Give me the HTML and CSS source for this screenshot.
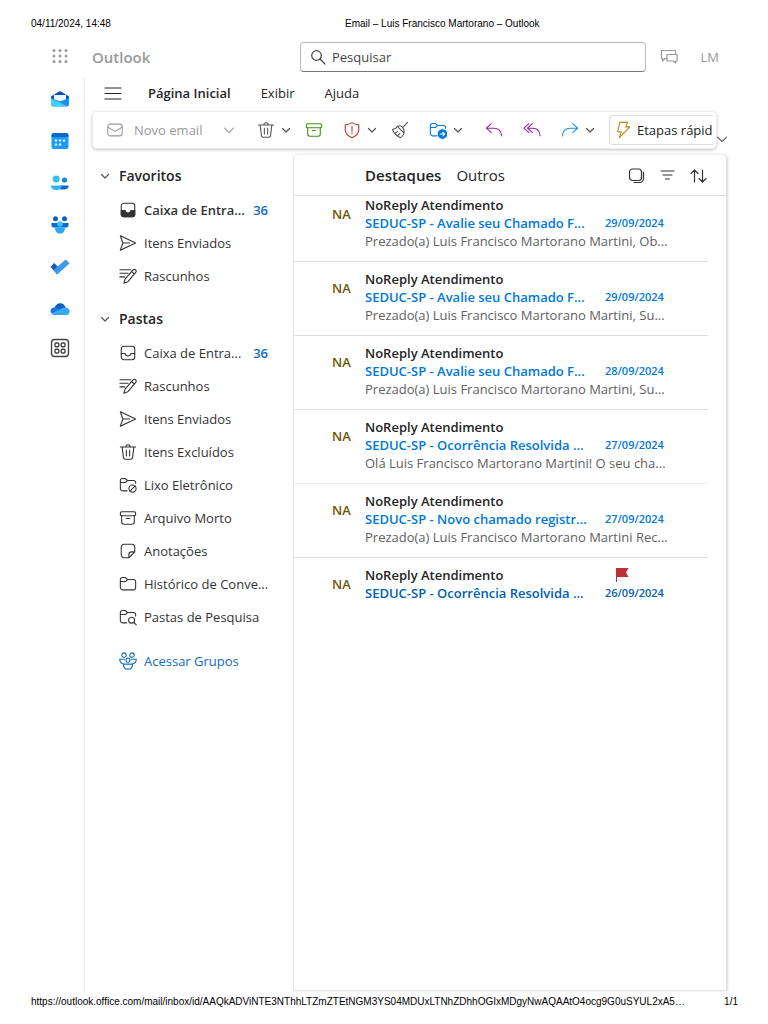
FILE: index.html
```html
<!DOCTYPE html>
<html lang="pt-BR">

<head>
    <meta charset="UTF-8" />
    <meta name="viewport" content="width=device-width, initial-scale=1" />
    <title>Email – Luis Francisco Martorano – Outlook</title>
    <link rel="stylesheet" href="styles.css">
</head>

<body>
    <svg class="sprite" aria-hidden="true">
        <symbol id="i-chevron" viewBox="0 0 14 14"><path d="M3.500 5.500L7 9l3.500-3.500" /></symbol>
        <symbol id="i-mail" viewBox="0 0 20 20"><rect x="2" y="3.5" width="16" height="13" rx="2.5" /><path d="M2 7l8 4.5L18 7" /></symbol>
        <symbol id="i-trash" viewBox="0 0 20 20"><path d="M1.500 4.500h17M7.500 4.500a2.500 2.500 0 0 1 5 0M3.500 4.500l1.400 11.500a2.200 2.200 0 0 0 2.200 2h5.800a2.200 2.200 0 0 0 2.200-2l1.400-11.500M8.200 8v6.500M11.800 8v6.500" /></symbol>
        <symbol id="i-archive" viewBox="0 0 20 20"><rect x="1.500" y="3" width="17" height="4.500" rx="1.500" /><path d="M3 7.500v7a2.500 2.500 0 0 0 2.500 2.500h9a2.500 2.500 0 0 0 2.500-2.500v-7M8 10.500h4" /></symbol>
        <symbol id="i-shield" viewBox="0 0 20 20"><path d="M10 1.800c2.300 1.500 4.600 2.300 7.500 2.500v5c0 4.500-2.600 7.400-7.500 9.300-4.900-1.900-7.500-4.800-7.500-9.300v-5c2.900-.2 5.200-1 7.500-2.500zM10 6v5M10 13.200v1" /></symbol>
        <symbol id="i-broom" viewBox="0 0 20 20"><path d="M18.500 1.500l-5.500 5.500M7 6l7.500 7.500M7 6c1.800-1 4-.8 5.500.7s2.500 4 2 6.800c-.7 2.300-2 4-4 5C6.500 17 3.500 14 1.500 9.500 4 9 6 8 7 6zM4.500 13.500l3-2M7.500 16.300l2.500-2.500" /></symbol>
        <symbol id="i-move" viewBox="0 0 20 20"><path d="M9 16.500H4A2.500 2.500 0 0 1 1.500 14V5A2.200 2.200 0 0 1 3.700 2.800h3.500L9.500 5h6.700a2.300 2.300 0 0 1 2.300 2.300V8M1.500 7.300h5.700L9.500 5" /><circle cx="15" cy="14.500" r="4.800" fill="currentColor" /><path class="on" d="M12.500 14.500h5M15.500 12.500l2 2-2 2" /></symbol>
        <symbol id="i-reply" viewBox="0 0 20 20"><path d="M7 3L1.500 8 7 13M1.500 8h8.500c4.500 0 8 3 8.500 8.500" /></symbol>
        <symbol id="i-replyall" viewBox="0 0 20 20"><path d="M6.500 3L1 8l5.500 5M10.500 3L5 8l5.500 5M5 8h6c4.500 0 7.500 3 8 8.500" /></symbol>
        <symbol id="i-forward" viewBox="0 0 20 20"><path d="M13 3l5.500 5-5.500 5M18.500 8H10c-4.500 0-8 3-8.500 8.500" /></symbol>
        <symbol id="i-bolt" viewBox="0 0 20 20"><path d="M6.500 1.500h8.500l-2 5h4.500L6 18.500 8 12H4z" /></symbol>
        <symbol id="i-inbox" viewBox="0 0 20 20"><rect x="2.500" y="2.500" width="15" height="15" rx="3" /><path d="M2.500 10.500h4.200c.6 3.800 6 3.800 6.600 0h4.200" /></symbol>
        <symbol id="i-inbox-fill" viewBox="0 0 20 20"><rect x="2.500" y="2.500" width="15" height="15" rx="3" /><path fill="currentColor" d="M2.500 10.500h4.200c.6 3.800 6 3.800 6.600 0h4.200V15a2.500 2.500 0 0 1-2.500 2.500H5A2.500 2.500 0 0 1 2.500 15z" /></symbol>
        <symbol id="i-send" viewBox="0 0 20 20"><path d="M1.500 2l17 8-17 8 2.800-8zM4.300 10h7.500" /></symbol>
        <symbol id="i-draft" viewBox="0 0 20 20"><path d="M5.500 18l1.200-4.500L15.800 3a2.100 2.100 0 0 1 3 2.800L9.700 16.500zM14 5l3 3M1 3h12M1 7h9M1 11h5.500" /></symbol>
        <symbol id="i-junk" viewBox="0 0 20 20"><path d="M9 16.500H4A2.500 2.500 0 0 1 1.500 14V5A2.200 2.200 0 0 1 3.700 2.800h3.500L9.500 5h6.700a2.300 2.300 0 0 1 2.300 2.300V8M1.500 7.300h5.700L9.500 5" /><circle cx="15" cy="14" r="4" /><path d="M12.200 16.800l5.600-5.600" /></symbol>
        <symbol id="i-note" viewBox="0 0 20 20"><path d="M5.500 2.500h9a3 3 0 0 1 3 3V11l-6.500 6.500H5.500a3 3 0 0 1-3-3v-9a3 3 0 0 1 3-3zM11 17.500V14a3 3 0 0 1 3-3h3.500" /></symbol>
        <symbol id="i-folder" viewBox="0 0 20 20"><path d="M1.500 5A2.200 2.200 0 0 1 3.700 2.800h3.500L9.500 5h6.700a2.300 2.300 0 0 1 2.300 2.300v6.900a2.300 2.300 0 0 1-2.300 2.300H4A2.500 2.500 0 0 1 1.500 14zM1.500 7.300h5.700L9.500 5" /></symbol>
        <symbol id="i-fsearch" viewBox="0 0 20 20"><path d="M8.500 16.500H4A2.500 2.500 0 0 1 1.500 14V5A2.200 2.200 0 0 1 3.700 2.800h3.500L9.500 5h6.700a2.300 2.300 0 0 1 2.300 2.300V9M1.500 7.300h5.700L9.500 5M16.500 16l2.700 2.700" /><circle cx="14" cy="13.500" r="3.300" /></symbol>
        <symbol id="i-groups" viewBox="0 0 20 20"><circle cx="5.500" cy="3.500" r="2.500" /><circle cx="14.500" cy="3.500" r="2.500" /><circle cx="10" cy="9" r="2.300" /><path d="M6 8H.800c0 3 1.500 4.800 4 5M14 8h5.200c0 3-1.500 4.800-4 5M5 13.500h10c0 3.500-2 5.500-5 5.500s-5-2-5-5.500z" /></symbol>
        <symbol id="i-flag" viewBox="0 0 14 14"><path d="M1 0h12.500l-2.500 4.500 2.500 4.500H2v5H1z" /></symbol>
    </svg>

    <header class="print-line">
        <span class="stamp">04/11/2024, 14:48</span>
        <span>Email – Luis Francisco Martorano – Outlook</span>
    </header>

    <div class="topbar">
        <div class="brand">
            <button class="icon-btn waffle" aria-label="Iniciador de aplicativos">
                <svg viewBox="0 0 18 18"><g fill="#999"><circle cx="3" cy="2.500" r="1.500" /><circle cx="9" cy="2.500" r="1.500" /><circle cx="15" cy="2.500" r="1.500" /><circle cx="3" cy="8" r="1.500" /><circle cx="9" cy="8" r="1.500" /><circle cx="15" cy="8" r="1.500" /><circle cx="3" cy="13.500" r="1.500" /><circle cx="9" cy="13.500" r="1.500" /><circle cx="15" cy="13.500" r="1.500" /></g></svg>
            </button>
            <span class="brand-name">Outlook</span>
        </div>
        <label class="search">
            <svg class="icon" viewBox="0 0 16 16"><circle cx="6.500" cy="6.500" r="4.800" /><path d="M10 10l5 5" /></svg>
            <input type="text" placeholder="Pesquisar" aria-label="Pesquisar">
        </label>
        <div class="account">
            <button class="icon-btn chat" aria-label="Teams">
                <svg class="icon" viewBox="0 0 18 18"><path d="M6.500 10.500H5L2.500 13v-2.500h-1v-8h14v3M7 6.500h10v6.500h-1.500v2L13 13H7z" /></svg>
            </button>
            <button class="icon-btn initials">LM</button>
        </div>
    </div>

    <div class="app">
        <nav class="rail" aria-label="Aplicativos">
            <button aria-label="Email">
                <svg viewBox="0 0 20 20"><path fill="#0f4fb5" d="M1 7.500l8-5q1-.6 2 0l8 5v6H1z" /><path fill="#e9f5ff" d="M4 6h12v6.500H4z" /><path fill="#1a8fee" d="M1 9l9 3.500L19 9v6a2.500 2.500 0 0 1-2.500 2.500h-13A2.500 2.500 0 0 1 1 15z" /><path fill="#3fd0fb" d="M1 9.500l16.500 7.800a3 3 0 0 1-1 .2h-13A2.500 2.500 0 0 1 1 15z" /></svg>
            </button>
            <button aria-label="Calendário">
                <svg viewBox="0 0 20 20"><rect x="1.500" y="2" width="17" height="16" rx="2.500" fill="#1b9cf5" /><path fill="#0b67c9" d="M4 2h12a2.500 2.500 0 0 1 2.500 2.500V6h-17V4.500A2.500 2.500 0 0 1 4 2z" /><g fill="#e3f4ff"><circle cx="6" cy="9.500" r="1.200" /><circle cx="10" cy="9.500" r="1.200" /><circle cx="14" cy="9.500" r="1.200" /><circle cx="6" cy="13.500" r="1.200" /><circle cx="10" cy="13.500" r="1.200" /></g></svg>
            </button>
            <button aria-label="Pessoas">
                <svg viewBox="0 0 20 20"><circle cx="6.200" cy="6" r="3.500" fill="#33bdf5" /><circle cx="14.500" cy="7" r="2.600" fill="#1685dc" /><path fill="#0b67c9" d="M10 12.500h8.500c.3 2.800-1.500 4-4.500 4h-4z" /><path fill="#2bb7f5" d="M1 12.500h10.500c.3 3-2 4.500-5.200 4.500S.7 15.500 1 12.500z" /></svg>
            </button>
            <button aria-label="Grupos">
                <svg viewBox="0 0 20 20"><circle cx="5.500" cy="3.800" r="2.500" fill="#0f5fc0" /><circle cx="14.500" cy="3.800" r="2.500" fill="#0f5fc0" /><path fill="#0f69cb" d="M1.500 8h17v2.500a2 2 0 0 1-2 2h-13a2 2 0 0 1-2-2z" /><circle cx="10" cy="9" r="2.800" fill="#35c3f6" /><path fill="#2aa9f2" d="M5 12.500h10c0 4-2 6-5 6s-5-2-5-6z" /></svg>
            </button>
            <button aria-label="To Do">
                <svg viewBox="0 0 20 20"><path fill="#1d57b8" d="M.500 9.700l3.700-3.700 6.300 6.300-3.700 4.700z" /><path fill="#3d9aeb" d="M3.500 13L15.700 2.500l3.800 3.700L7.300 17.500z" /></svg>
            </button>
            <button aria-label="OneDrive">
                <svg viewBox="0 0 20 20"><path fill="#0f5cbf" d="M4.500 9c1-3.500 3.500-5 6-4.800 2.500.1 4.200 1.800 5 4.300L12 13H5z" /><path fill="#1479d9" d="M4.500 8.500c1.500-.3 3 0 4.500 1l6 5.500H4A3.500 3.500 0 0 1 .500 12c0-2 1.500-3.300 4-3.500z" /><path fill="#37a8f4" d="M15.500 8.500c5.500.3 5.500 7.500.5 7.500H4a4 4 0 0 1-3-1.500l9-4c1.500-1.500 3.500-2.300 5.500-2z" /></svg>
            </button>
            <button class="last" aria-label="Mais aplicativos">
                <svg class="icon apps" viewBox="0 0 20 20"><rect x="1.500" y="1.500" width="17" height="17" rx="3" /><rect x="5" y="5" width="3.800" height="3.800" rx="1" /><rect x="11.200" y="5" width="3.800" height="3.800" rx="1" /><rect x="5" y="11.200" width="3.800" height="3.800" rx="1" /><rect x="11.200" y="11.200" width="3.800" height="3.800" rx="1" /></svg>
            </button>
        </nav>

        <main class="main">
            <div class="tabs">
                <button class="icon-btn menu" aria-label="Menu">
                    <svg class="icon" viewBox="0 0 18 18"><path d="M1 4h16M1 9.500h16M1 15h16" /></svg>
                </button>
                <button class="tab active">Página Inicial</button>
                <button class="tab">Exibir</button>
                <button class="tab">Ajuda</button>
            </div>

            <div class="ribbon">
                <div class="toolbar">
                    <button class="new-mail">
                        <svg class="icon"><use href="#i-mail" /></svg>
                        <span>Novo email</span>
                        <svg class="icon chevron wide"><use href="#i-chevron" /></svg>
                    </button>
                    <div class="tools">
                        <div class="pair">
                            <button class="tool" aria-label="Excluir"><svg class="icon"><use href="#i-trash" /></svg><svg class="icon chevron"><use href="#i-chevron" /></svg></button>
                            <button class="tool green" aria-label="Arquivar"><svg class="icon"><use href="#i-archive" /></svg></button>
                        </div>
                        <div class="pair">
                            <button class="tool red" aria-label="Denunciar"><svg class="icon"><use href="#i-shield" /></svg><svg class="icon chevron"><use href="#i-chevron" /></svg></button>
                            <button class="tool" aria-label="Limpar"><svg class="icon"><use href="#i-broom" /></svg></button>
                        </div>
                        <button class="tool blue" aria-label="Mover para"><svg class="icon"><use href="#i-move" /></svg><svg class="icon chevron"><use href="#i-chevron" /></svg></button>
                        <button class="tool purple" aria-label="Responder"><svg class="icon"><use href="#i-reply" /></svg></button>
                        <button class="tool purple" aria-label="Responder a todos"><svg class="icon"><use href="#i-replyall" /></svg></button>
                        <button class="tool sky" aria-label="Encaminhar"><svg class="icon"><use href="#i-forward" /></svg><svg class="icon chevron"><use href="#i-chevron" /></svg></button>
                    </div>
                    <button class="quick-steps">
                        <svg class="icon"><use href="#i-bolt" /></svg>
                        <span>Etapas rápidas</span>
                    </button>
                </div>
                <button class="icon-btn expand" aria-label="Opções da faixa"><svg class="icon chevron wide"><use href="#i-chevron" /></svg></button>
            </div>

            <div class="content">
                <nav class="folders" aria-label="Pastas">
                    <button class="group"><svg class="icon chevron"><use href="#i-chevron" /></svg>Favoritos</button>
                    <a href="#" class="folder unread"><svg class="icon"><use href="#i-inbox-fill" /></svg><span>Caixa de Entra...</span><b>36</b></a>
                    <a href="#" class="folder"><svg class="icon"><use href="#i-send" /></svg><span>Itens Enviados</span></a>
                    <a href="#" class="folder"><svg class="icon"><use href="#i-draft" /></svg><span>Rascunhos</span></a>

                    <button class="group second"><svg class="icon chevron"><use href="#i-chevron" /></svg>Pastas</button>
                    <a href="#" class="folder"><svg class="icon"><use href="#i-inbox" /></svg><span>Caixa de Entra...</span><b>36</b></a>
                    <a href="#" class="folder"><svg class="icon"><use href="#i-draft" /></svg><span>Rascunhos</span></a>
                    <a href="#" class="folder"><svg class="icon"><use href="#i-send" /></svg><span>Itens Enviados</span></a>
                    <a href="#" class="folder"><svg class="icon"><use href="#i-trash" /></svg><span>Itens Excluídos</span></a>
                    <a href="#" class="folder"><svg class="icon"><use href="#i-junk" /></svg><span>Lixo Eletrônico</span></a>
                    <a href="#" class="folder"><svg class="icon"><use href="#i-archive" /></svg><span>Arquivo Morto</span></a>
                    <a href="#" class="folder"><svg class="icon"><use href="#i-note" /></svg><span>Anotações</span></a>
                    <a href="#" class="folder"><svg class="icon"><use href="#i-folder" /></svg><span>Histórico de Conve...</span></a>
                    <a href="#" class="folder"><svg class="icon"><use href="#i-fsearch" /></svg><span>Pastas de Pesquisa</span></a>

                    <a href="#" class="folder groups"><svg class="icon"><use href="#i-groups" /></svg><span>Acessar Grupos</span></a>
                </nav>

                <section class="panel">
                    <div class="panel-head">
                        <button class="pivot active">Destaques</button>
                        <button class="pivot">Outros</button>
                        <div class="panel-tools">
                            <button class="icon-btn" aria-label="Selecionar"><svg class="icon" viewBox="0 0 18 18"><rect x="1.500" y="3" width="12" height="11.500" rx="3" /><path d="M15.500 6v6.500a4 4 0 0 1-4 4H6" /></svg></button>
                            <button class="icon-btn" aria-label="Filtrar"><svg class="icon" viewBox="0 0 18 18"><path d="M2 5h13M4 9h9M6.500 13h4" /></svg></button>
                            <button class="icon-btn" aria-label="Classificar"><svg class="icon sort" viewBox="0 0 18 18"><path d="M4.500 16V4M1 7.500L4.500 4 8 7.500M12.500 4v12M9 12.500l3.500 3.500 3.500-3.500" /></svg></button>
                        </div>
                    </div>

                    <article class="message">
                        <span class="avatar">NA</span>
                        <div class="sender">NoReply Atendimento</div>
                        <a href="#" class="subject">SEDUC-SP - Avalie seu Chamado F...</a>
                        <time class="date">29/09/2024</time>
                        <div class="preview">Prezado(a) Luis Francisco Martorano Martini, Ob...</div>
                    </article>
                    <article class="message">
                        <span class="avatar">NA</span>
                        <div class="sender">NoReply Atendimento</div>
                        <a href="#" class="subject">SEDUC-SP - Avalie seu Chamado F...</a>
                        <time class="date">29/09/2024</time>
                        <div class="preview">Prezado(a) Luis Francisco Martorano Martini, Su...</div>
                    </article>
                    <article class="message">
                        <span class="avatar">NA</span>
                        <div class="sender">NoReply Atendimento</div>
                        <a href="#" class="subject">SEDUC-SP - Avalie seu Chamado F...</a>
                        <time class="date">28/09/2024</time>
                        <div class="preview">Prezado(a) Luis Francisco Martorano Martini, Su...</div>
                    </article>
                    <article class="message faint">
                        <span class="avatar">NA</span>
                        <div class="sender">NoReply Atendimento</div>
                        <a href="#" class="subject">SEDUC-SP - Ocorrência Resolvida ...</a>
                        <time class="date">27/09/2024</time>
                        <div class="preview">Olá Luis Francisco Martorano Martini! O seu cha...</div>
                    </article>
                    <article class="message">
                        <span class="avatar">NA</span>
                        <div class="sender">NoReply Atendimento</div>
                        <a href="#" class="subject">SEDUC-SP - Novo chamado registr...</a>
                        <time class="date">27/09/2024</time>
                        <div class="preview">Prezado(a) Luis Francisco Martorano Martini Rec...</div>
                    </article>
                    <article class="message dark">
                        <span class="avatar">NA</span>
                        <div class="sender">NoReply Atendimento</div>
                        <svg class="flag" role="img" aria-label="Sinalizado"><use href="#i-flag" /></svg>
                        <a href="#" class="subject">SEDUC-SP - Ocorrência Resolvida ...</a>
                        <time class="date">26/09/2024</time>
                    </article>
                </section>
            </div>
        </main>
    </div>

    <footer class="print-line foot">
        <span class="url">https://outlook.office.com/mail/inbox/id/AAQkADViNTE3NThhLTZmZTEtNGM3YS04MDUxLTNhZDhhOGIxMDgyNwAQAAtO4ocg9G0uSYUL2xA5…</span>
        <span>1/1</span>
    </footer>
</body>

</html>
```

FILE: styles.css
```css
* {
    box-sizing: border-box;
}

body {
    font-family: 'Open Sans', 'Noto Sans', sans-serif;
    font-size: 13px;
    line-height: 18px;
    background: #fff;
    color: #242424;
    margin: 0;
    min-height: 100vh;
    display: flex;
    flex-direction: column;
}

button {
    font: inherit;
    color: inherit;
    background: none;
    border: none;
    padding: 0;
    cursor: pointer;
}

a {
    color: inherit;
    text-decoration: none;
}

.sprite {
    display: none;
}

.icon {
    width: 18px;
    height: 18px;
    flex: none;
    fill: none;
    stroke: currentColor;
    stroke-width: 1.2;
    stroke-linecap: round;
    stroke-linejoin: round;
}

.icon.chevron {
    width: 14px;
    height: 14px;
    color: #555;
}

.icon.chevron.wide {
    width: 18px;
    height: 18px;
    stroke-width: 0.8;
}

.on {
    stroke: #fff;
}

.icon-btn {
    display: flex;
    align-items: center;
    justify-content: center;
    flex: none;
}

.print-line {
    display: flex;
    padding: 18px 30px 0 31px;
    font: 10px/12px 'Liberation Sans', Arial, sans-serif;
    color: #000;
}

.print-line .stamp {
    width: 314px;
}

.foot {
    justify-content: space-between;
    padding: 5px 30px 16px 31px;
}

/* top bar */
.topbar {
    display: flex;
    align-items: center;
    margin-top: 12px;
    padding: 0 49px 0 51px;
    color: #999;
}

.brand {
    display: flex;
    align-items: center;
    gap: 23px;
    width: 249px;
}

.waffle svg {
    width: 18px;
    height: 18px;
}

.brand-name {
    font-size: 15px;
    font-weight: 600;
}

.search {
    display: flex;
    align-items: center;
    gap: 6px;
    flex: 1;
    height: 30px;
    padding: 0 9px;
    border: 1px solid #bbb;
    border-bottom-color: #777;
    border-radius: 4px;
    color: #444;
}

.search .icon {
    width: 16px;
    height: 16px;
}

.search input {
    flex: 1;
    min-width: 0;
    border: none;
    outline: none;
    padding: 0;
    background: none;
    font: inherit;
}

.search input::placeholder {
    color: #444;
    opacity: 1;
}

.account {
    display: flex;
    justify-content: space-between;
    width: 73px;
    padding-left: 14px;
}

/* app shell */
.app {
    display: flex;
    flex: 1;
    margin-top: 6px;
}

.rail {
    display: flex;
    flex-direction: column;
    align-items: flex-end;
    width: 85px;
    padding-right: 14px;
    border-right: 1px solid #ebebeb;
}

.rail button {
    display: flex;
    align-items: center;
    height: 42px;
}

.rail button.last {
    height: 36px;
}

.rail svg {
    width: 20px;
    height: 20px;
}

.rail .apps {
    color: #444;
    stroke-width: 1.4;
}

.main {
    display: flex;
    flex-direction: column;
    flex: 1;
    min-width: 0;
    padding: 0 41px 0 7px;
}

.tabs {
    display: flex;
    align-items: center;
    gap: 30px;
    height: 30px;
    padding-left: 12px;
}

.tabs .menu {
    margin-right: -4px;
}

.tab.active {
    font-weight: 600;
}

.ribbon {
    display: flex;
    align-items: center;
    height: 38px;
    margin-top: 3px;
}

.toolbar {
    display: flex;
    align-items: center;
    flex: 1;
    min-width: 0;
    height: 38px;
    padding-left: 13px;
    border: 1px solid #ededed;
    border-radius: 5px;
    box-shadow: 0 1px 3px rgb(0 0 0 / 0.25);
}

.new-mail {
    display: flex;
    align-items: center;
    flex: none;
    gap: 10px;
    width: 132px;
    color: #999;
}

.new-mail .icon.chevron {
    margin-left: auto;
    color: #999;
}

.tools {
    display: flex;
    flex: none;
    gap: 20px;
    margin-left: 19px;
    color: #555;
}

.pair {
    display: flex;
    gap: 12px;
}

.tool {
    display: flex;
    align-items: center;
    gap: 4px;
}

.green {
    color: #3f8f15;
}

.red {
    color: #bc2f32;
}

.blue {
    color: #0078d9;
}

.purple {
    color: #9527a8;
}

.sky {
    color: #1c8be6;
}

.quick-steps {
    display: flex;
    align-items: center;
    gap: 5px;
    flex: 1;
    min-width: 0;
    height: 30px;
    margin: 0 3px 0 12px;
    padding-left: 4px;
    border: 1px solid #ddd;
    border-right: none;
    border-radius: 4px 0 0 4px;
    overflow: hidden;
    white-space: nowrap;
}

.quick-steps .icon {
    color: #b8860b;
}

.expand {
    align-self: flex-end;
    width: 10px;
    height: 20px;
}

/* folder list */
.content {
    display: flex;
    flex: 1;
    margin-top: 5px;
}

.folders {
    width: 201px;
    flex: none;
    padding-top: 5px;
}

.group {
    display: flex;
    align-items: center;
    gap: 7px;
    height: 34px;
    padding-left: 6px;
    font-size: 14px;
    font-weight: 600;
}

.group.second {
    margin-top: 10px;
}

.folder {
    display: flex;
    align-items: center;
    gap: 7px;
    height: 33px;
    padding: 0 25px 0 27px;
    color: #333;
    white-space: nowrap;
}

.folder b {
    margin-left: auto;
    color: #0f6cbd;
    font-weight: 600;
}

.unread {
    font-weight: 600;
}

.folder.groups {
    margin-top: 11px;
    color: #0f6cbd;
}

/* message list */
.panel {
    flex: 1;
    min-width: 0;
    border: 1px solid #e4e4e4;
    border-top-color: #f0f0f0;
    border-radius: 5px 5px 0 0;
    box-shadow: 1px 0 2px rgb(0 0 0 / 0.15);
}

.panel-head {
    display: flex;
    align-items: center;
    gap: 15px;
    height: 41px;
    padding: 0 18px 0 71px;
    border-bottom: 1px solid #ddd;
    font-size: 15px;
}

.pivot.active {
    font-weight: 600;
}

.panel-tools {
    display: flex;
    gap: 13px;
    margin-left: auto;
    color: #333;
}

.message {
    display: grid;
    grid-template-columns: 71px 1fr 62px;
    grid-auto-rows: 18px;
    align-items: center;
    margin-right: 18px;
    padding: 8px 41px 11px 0;
    border-bottom: 1px solid #ddd;
    white-space: nowrap;
}

.panel-head + .message {
    padding-top: 0;
}

.message.faint {
    border-bottom-color: #f0f0f0;
}

.message:last-child {
    border-bottom: none;
}

.avatar {
    grid-row: 1 / span 2;
    padding-left: 38px;
    color: #6d5700;
    font-weight: 600;
}

.sender {
    grid-column: 2;
    font-weight: 600;
}

.subject {
    grid-column: 2;
    color: #0078d9;
    font-weight: 600;
}

.date {
    grid-column: 3;
    color: #0078d9;
    font-size: 11px;
    font-weight: 600;
}

.preview {
    grid-column: 2 / span 2;
    color: #616161;
}

.dark .subject, .dark .date {
    color: #0060b0;
}

.flag {
    grid-column: 3;
    width: 14px;
    height: 14px;
    margin-left: 10px;
    fill: #bc2f32;
}
```
